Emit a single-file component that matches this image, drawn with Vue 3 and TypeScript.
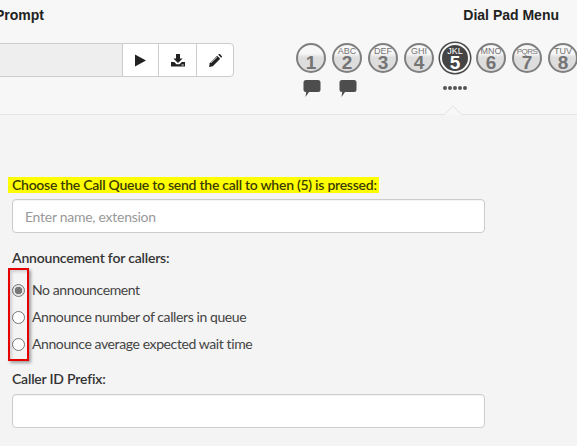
<script setup lang="ts">
const keys = [
  { num: '1', sub: '', msg: true, on: false },
  { num: '2', sub: 'ABC', msg: true, on: false },
  { num: '3', sub: 'DEF', msg: false, on: false },
  { num: '4', sub: 'GHI', msg: false, on: false },
  { num: '5', sub: 'JKL', msg: false, on: true },
  { num: '6', sub: 'MNO', msg: false, on: false },
  { num: '7', sub: 'PQRS', msg: false, on: false },
  { num: '8', sub: 'TUV', msg: false, on: false }
]
const options = [
  'No announcement',
  'Announce number of callers in queue',
  'Announce average expected wait time'
]
</script>

<template>
  <div class="page">
    <header class="top">
      <section class="prompt">
        <h4 class="title">Prompt</h4>
        <div class="toolbar">
          <div class="file" />
          <button class="tool">
            <svg width="13" height="13" viewBox="0 0 13 13"><path d="M1 .5 12 6.500 1 12.500Z" fill="#222" /></svg>
          </button>
          <button class="tool dl">
            <svg width="14" height="13" viewBox="0 0 14 13">
              <path d="M5 0h4v4.500h2.600L7 9 2.400 4.500H5Z" fill="#222" />
              <path d="M0 8h3.200L5.500 10.200h3L10.800 8H14v4.500H0Z" fill="#222" />
              <path d="M10.500 11h2.200" stroke="#f7f7f7" stroke-width="1" />
            </svg>
          </button>
          <button class="tool pen">
            <svg width="13" height="13" viewBox="0 0 13 13">
              <path d="M0 13 .8 9.200 8.200 1.800 11.200 4.800 3.800 12.200Z" fill="#222" />
              <path d="M9.200 .8 9.700.3a1 1 0 0 1 1.400 0L12.700 1.900a1 1 0 0 1 0 1.400l-.5.500Z" fill="#222" />
              <path d="M2 8.800 8.200 3" stroke="#f7f7f7" stroke-width=".7" />
            </svg>
          </button>
        </div>
      </section>

      <section class="dial">
        <h4 class="title menu-title">Dial Pad Menu</h4>
        <div class="keys">
          <div v-for="k in keys" :key="k.num" class="key-col">
            <div class="key" :class="{ on: k.on }">
              <span class="sub" :class="{ tight: k.sub.length > 3 }">{{ k.sub }}</span>
              <span class="num">{{ k.num }}</span>
            </div>
            <svg v-if="k.msg" class="bubble" width="18" height="18" viewBox="0 0 18 18">
              <path d="M3 0h12a2.500 2.500 0 0 1 2.500 2.500v7A2.500 2.500 0 0 1 15 12H6L2.500 17 3.200 12H3A2.500 2.500 0 0 1 .5 9.500v-7A2.500 2.500 0 0 1 3 0Z" fill="#4d4d4d" />
            </svg>
            <div v-if="k.on" class="dots"><i v-for="n in 5" :key="n" /></div>
          </div>
        </div>
      </section>
      <span class="notch" />
    </header>

    <form class="form">
      <label class="label"><mark>Choose the Call Queue to send the call to when (5) is pressed:</mark></label>
      <input class="field" placeholder="Enter name, extension" />

      <label class="label announce">Announcement for callers:</label>
      <div class="radios">
        <label v-for="(o, i) in options" :key="o" class="radio">
          <span class="dot" :class="{ checked: i === 0 }" />
          {{ o }}
        </label>
        <span class="callout" />
      </div>

      <label class="label prefix">Caller ID Prefix:</label>
      <input class="field" />
    </form>
  </div>
</template>

<style>
html,
body {
  margin: 0;
  background: #f4f4f4;
  overflow: hidden;
}
</style>

<style scoped>
.page {
  width: 577px;
  height: 446px;
  overflow: hidden;
  font-family: Lato, "Open Sans", sans-serif;
  color: #333;
}
.top {
  position: relative;
  height: 115px;
  box-sizing: border-box;
  display: flex;
  justify-content: space-between;
  background: #f7f7f7;
  border-bottom: 1px solid #e4e4e4;
}
.title {
  margin: 0;
  font: bold 14px/16px "Liberation Sans", Arial, sans-serif;
  color: #222;
}
.prompt {
  padding-top: 7px;
  margin-left: -5px;
}
.toolbar {
  display: flex;
  height: 34px;
  margin-top: 20px;
  margin-left: -78px;
  box-sizing: border-box;
  border: 1px solid #ccc;
  border-radius: 4px;
  background: #fff;
}
.file {
  width: 204px;
  background: #eee;
}
.tool {
  padding: 0;
  border: none;
  border-left: 1px solid #ccc;
  background: transparent;
  display: flex;
  align-items: center;
  justify-content: center;
  width: 36px;
}
.tool.dl {
  width: 38px;
}
.tool.pen {
  width: 37px;
  border-radius: 0 4px 4px 0;
}
.dial {
  position: relative;
  width: 282px;
  padding-top: 7px;
  flex: none;
  margin-right: -1px;
}
.menu-title {
  text-align: right;
  margin-right: 19px;
}
.keys {
  display: flex;
  gap: 6px;
  margin-top: 20px;
}
.key-col {
  width: 30px;
  display: flex;
  flex-direction: column;
  align-items: center;
}
.key {
  position: relative;
  width: 30px;
  height: 30px;
  box-sizing: border-box;
  border-radius: 50%;
  border: 2px solid #7f7f7f;
  background: linear-gradient(#f7f7f7 0 32%, #dedede 48%, #dcdcdc);
  color: #747474;
  display: flex;
  flex-direction: column;
  align-items: center;
  font-family: "Liberation Sans", Arial, sans-serif;
  text-align: center;
}
.sub {
  height: 8px;
  margin-top: 2px;
  font-size: 9px;
  line-height: 9px;
  white-space: nowrap;
}
.sub.tight {
  font-size: 8px;
  letter-spacing: -0.5px;
}
.num {
  font-size: 19px;
  font-weight: bold;
  line-height: 15px;
}
.key.on {
  border-color: #f7f7f7;
  background: #444;
  box-shadow: 0 0 0 1.5px #4a4a4a;
  color: #fff;
}
.bubble {
  margin-top: 7px;
  margin-left: 2px;
}
.dots {
  display: flex;
  gap: 1px;
  margin-top: 13px;
}
.dots i {
  width: 4px;
  height: 4px;
  border-radius: 50%;
  background: #555;
}
.notch {
  position: absolute;
  left: 446px;
  bottom: -8px;
  width: 14px;
  height: 14px;
  transform: rotate(45deg);
  background: #f7f7f7;
  border-top: 1px solid #e4e4e4;
  border-left: 1px solid #e4e4e4;
  box-sizing: border-box;
  clip-path: polygon(0 0, 100% 0, 0 100%);
}
.form {
  padding: 60px 0 0 12px;
  width: 473px;
  font-size: 14px;
}
.label {
  display: block;
  font-weight: 600;
  line-height: 20px;
  letter-spacing: -0.2px;
  color: #333;
}
mark {
  display: inline-block;
  background: #ff0;
  margin-left: -4px;
  padding: 0 2px 0 4px;
  line-height: 16px;
  letter-spacing: -0.26px;
  color: #3c3c00;
}
.field {
  display: block;
  width: 100%;
  height: 34px;
  box-sizing: border-box;
  margin-top: 4px;
  padding: 0 12px;
  border: 1px solid #ccc;
  border-radius: 4px;
  background: #fff;
  font: inherit;
  letter-spacing: -0.27px;
  box-shadow: inset 0 1px 1px rgba(0, 0, 0, 0.05);
}
.field::placeholder {
  color: #999;
}
.announce {
  margin-top: 15px;
}
.radios {
  position: relative;
  margin-top: 12px;
  display: flex;
  flex-direction: column;
  gap: 7px;
}
.radio {
  display: flex;
  align-items: center;
  gap: 7px;
  height: 20px;
  line-height: 20px;
  letter-spacing: -0.4px;
  color: #444;
}
.dot {
  width: 13px;
  height: 13px;
  box-sizing: border-box;
  border: 1px solid #767676;
  border-radius: 50%;
  background: #fff;
  flex: none;
}
.dot.checked {
  background: radial-gradient(circle, #777 0 3.5px, #e4e4e4 4px);
}
.callout {
  position: absolute;
  left: -4px;
  top: -12px;
  width: 21px;
  height: 93px;
  box-sizing: border-box;
  border: 2.5px solid #e60000;
  box-shadow: 2px 2px 3px rgba(0, 0, 0, 0.35), inset 2px 2px 3px rgba(0, 0, 0, 0.15);
}
.prefix {
  margin-top: 15px;
}
.prefix + .field {
  margin-top: 5px;
}
</style>
